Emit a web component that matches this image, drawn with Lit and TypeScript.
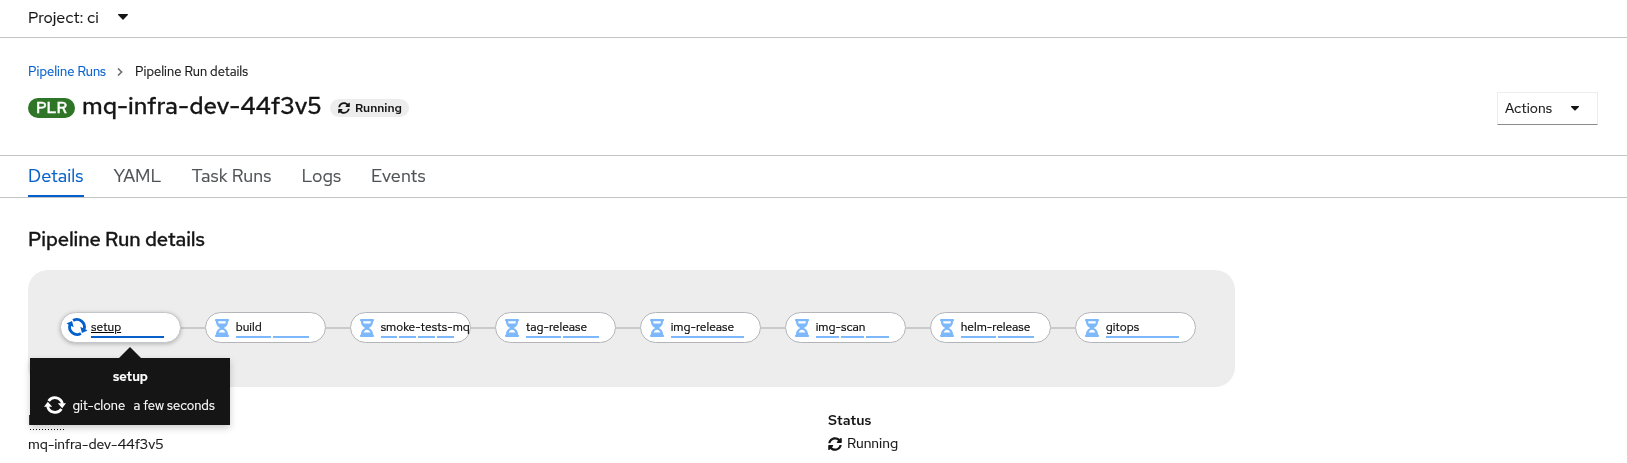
import { LitElement, html, css, svg } from "lit";
import { customElement } from "lit/decorators.js";

const SYNC = "M370.72 133.28C339.458 104.008 298.888 87.962 255.848 88c-77.458.068-144.328 53.178-162.791 126.85-1.344 5.363-6.122 9.15-11.651 9.15H24.103c-7.498 0-13.194-6.807-11.807-14.176C33.933 94.924 134.813 8 256 8c66.448 0 126.791 26.136 171.315 68.685L463.03 40.97C478.149 25.851 504 36.559 504 57.941V192c0 13.255-10.745 24-24 24H345.941c-21.382 0-32.09-25.851-16.971-40.971l41.75-41.749zM32 296h134.059c21.382 0 32.09 25.851 16.971 40.971l-41.75 41.75c31.262 29.273 71.835 45.319 114.876 45.28 77.418-.07 144.315-53.144 162.787-126.849 1.344-5.363 6.122-9.15 11.651-9.15h57.304c7.498 0 13.194 6.807 11.807 14.176C478.067 417.076 377.187 504 256 504c-66.448 0-126.791-26.136-171.315-68.685L48.97 471.03C33.851 486.149 8 475.441 8 454.059V320c0-13.255 10.745-24 24-24z";
const HOURGLASS = "M360 0H24C10.745 0 0 10.745 0 24v16c0 13.255 10.745 24 24 24 0 90.965 51.016 167.734 120.842 192C75.016 280.266 24 357.035 24 448c-13.255 0-24 10.745-24 24v16c0 13.255 10.745 24 24 24h336c13.255 0 24-10.745 24-24v-16c0-13.255-10.745-24-24-24 0-90.965-51.016-167.734-120.842-192C308.984 231.734 360 154.965 360 64c13.255 0 24-10.745 24-24V24c0-13.255-10.745-24-24-24zm-75.078 384H99.08c17.059-46.797 52.096-80 92.92-80 40.821 0 75.862 33.196 92.922 80zm.019-256H99.078C91.988 108.548 88 86.748 88 64h208c0 22.805-3.987 44.587-11.059 64z";

const sync = (cls: string) => html`<svg class=${cls} viewBox="0 0 512 512" fill="currentColor">${svg`<path d=${SYNC}></path>`}</svg>`;
const spinner = html`<svg class="spin" viewBox="0 0 22 22"><g fill="none" stroke="currentColor" stroke-width="2.8"><path d="M4.600 7A7.600 7.600 0 0 1 18.400 9.800"></path><path d="M17.400 15A7.600 7.600 0 0 1 3.600 12.200"></path></g><path fill="currentColor" d="M13.800 9.200H22l-3.800 5zM8.200 12.800H0l3.800-5z"></path></svg>`;
const caret = html`<svg class="caret" viewBox="0 0 10 6" fill="currentColor"><path d="M.6 0h8.800c.6 0 .8.6.4 1L5.500 5.400a.7.7 0 0 1-1 0L.2 1C-.2.600 0 0 .6 0z"></path></svg>`;

const TASKS = [
  { name: "setup", steps: 1, active: true },
  { name: "build", steps: 2 },
  { name: "smoke-tests-mq", steps: 4 },
  { name: "tag-release", steps: 2 },
  { name: "img-release", steps: 1 },
  { name: "img-scan", steps: 3 },
  { name: "helm-release", steps: 2 },
  { name: "gitops", steps: 1 },
];

@customElement("app-root")
export class AppRoot extends LitElement {
  static styles = css`
    :host { display: block; height: 463px; overflow: hidden; background: #fff; color: #151515; will-change: transform;
      -webkit-text-stroke: .2px currentColor;
      font: 14px/21px "Red Hat Text", Inter, "Liberation Sans", sans-serif; }
    * { box-sizing: border-box; }
    svg { display: block; flex: none; }
    .t { white-space: nowrap; }
    .project { display: flex; align-items: center; height: 38px; padding: 0 28px 3px; border-bottom: 1px solid #c3c4c6; font-size: 16px; }
    .project .t { width: 90px; letter-spacing: -.03px; }
    .caret { width: 10px; height: 6px; }
    .head { display: flex; flex-direction: column; height: 118px; padding: 23px 28px 0; border-bottom: 1px solid #c3c4c6; }
    .crumbs { display: flex; align-items: center; height: 21px; font-size: 13px; }
    .crumbs .link { color: #0560cc; width: 89px; }
    .chev { width: 6px; height: 8px; margin-right: 12px; }
    .titlebar { display: flex; align-items: flex-start; height: 44px; padding-top: 9px; }
    .title { display: flex; align-items: flex-start; flex: 1; height: 33px; }
    .badge { width: 47px; height: 20px; border-radius: 20px; background: #2f7527; color: #fff; font-size: 16px; line-height: 20px; text-align: center; font-weight: 500; -webkit-text-stroke-width: .4px; margin: 7px 7px 0 0; }
    .name { width: 248px; font-size: 24px; line-height: 32px; font-weight: 500; margin-top: -1px; -webkit-text-stroke-width: .3px; }
    .chip { display: flex; align-items: center; gap: 5px; width: 79px; height: 18px; padding-left: 8px; border-radius: 18px; background: #ededed; font-size: 12px; font-weight: 600; line-height: 18px; margin-top: 8px; -webkit-text-stroke-width: 0; }
    .s12 { width: 12px; height: 12px; }
    .s14 { width: 14px; height: 14px; }
    .actions { display: flex; align-items: center; width: 101px; height: 33px; margin: 1px 1px 0 0; padding-left: 7px; border: 1px solid #ededed; border-bottom-color: #8a8d90; }
    .actions .t { width: 66px; letter-spacing: .04px; }
    .actions .caret { width: 8px; height: 5px; }
    .tabs { display: flex; gap: 30px; height: 42px; padding-left: 28px; border-bottom: 1px solid #c3c4c6; font-size: 18px; line-height: 27px; color: #4f5255; }
    .tab { padding-top: 6px; height: 41px; border-bottom: 2px solid transparent; letter-spacing: .03px; }
    .tab.on { color: #0560cc; border-color: #0560cc; }
    .body { padding: 0 28px; }
    h2 { margin: 0; height: 72px; padding-top: 27px; font-size: 20px; line-height: 28px; font-weight: 500; letter-spacing: -.12px; -webkit-text-stroke-width: .35px; }
    .graph { display: flex; width: 1207px; height: 117px; padding: 42px 0 0 32.400px; border-radius: 20px; background: #ededed; }
    .node { display: flex; width: 121px; height: 31px; padding-left: 9px; border: 1px solid #b3b5b9; border-radius: 16px; background: #fff; font-size: 12px; line-height: 18px; position: relative; flex: none; color: #000; }
    .node.active { box-shadow: 0 1px 4px rgba(0,0,0,.25); padding-left: 5px; border-color: #c4c6c9; }
    .wire { flex: none; width: 24px; height: 2px; margin-top: 15px; background: #cacaca; }
    .hour { width: 14px; height: 18px; margin: 6px 6.300px 0 0; color: #7db8fa; }
    .spin { width: 22px; height: 22px; margin: 3px 2.600px 0 0; color: #0560cc; transform: rotate(27deg); }
    .label { display: flex; flex-direction: column; width: 73px; padding-top: 5px; }
    .active .label .t { text-decoration: underline; }
    .steps { display: flex; gap: 2px; height: 2px; }
    .steps i { flex: 1; background: #7db8fa; }
    .active .steps i { background: #0560cc; }
    .tip { position: absolute; top: 45px; left: -31px; width: 200px; height: 67px; background: #151515; color: #fff; box-shadow: 0 3px 7px rgba(0,0,0,.2); font-size: 13px; z-index: 2; }
    .arrow { width: 0; height: 0; border: 11px solid transparent; border-top: 0; border-bottom-color: #151515; margin: -11px auto 0; }
    .tipname { text-align: center; height: 29px; line-height: 20px; padding-top: 9px; font-weight: 600; }
    .tiprow { display: flex; align-items: center; height: 20px; padding-left: 14px; margin-top: 9px; }
    .tiprow .a { width: 61px; }
    .tiprow .spin { color: #fff; margin: -2px 6px 0 0; transform: none; }
    .facts { display: grid; grid-template-columns: 800px 1fr; padding-top: 23px; line-height: 21px; }
    .facts b { display: block; font-weight: 600; height: 23px; -webkit-text-stroke-width: 0; }
    .term { display: inline-block; width: 38px; height: 20px; background: repeating-linear-gradient(90deg, transparent 0 2px, #151515 2px 3px) 0 100% / 100% 1px no-repeat; }
    .n { display: block; padding-top: 1px; letter-spacing: -.03px; }
    .status { display: flex; align-items: center; gap: 5px; }
  `;

  render() {
    return html`
      <div class="project"><span class="t">Project: ci</span>${caret}</div>
      <header class="head">
        <nav class="crumbs"><span class="t link">Pipeline Runs</span>
          <svg class="chev" viewBox="0 0 6 8" fill="none" stroke="#6a6e73" stroke-width="1.6"><path d="M1 .5 4.600 4 1 7.500"></path></svg>
          <span class="t here">Pipeline Run details</span></nav>
        <div class="titlebar">
          <div class="title"><span class="badge t">PLR</span><span class="name t">mq-infra-dev-44f3v5</span>
            <span class="chip">${sync("s12")}<span class="t">Running</span></span></div>
          <div class="actions"><span class="t">Actions</span>${caret}</div>
        </div>
      </header>
      <nav class="tabs">${["Details", "YAML", "Task Runs", "Logs", "Events"].map((x, i) => html`<span class="tab t ${i === 0 ? "on" : ""}">${x}</span>`)}</nav>
      <main class="body">
        <h2><span class="t">Pipeline Run details</span></h2>
        <div class="graph">${TASKS.map((k, i) => html`${i ? html`<span class="wire"></span>` : ""}
          <div class="node ${k.active ? "active" : ""}">
            ${k.active ? spinner : html`<svg class="hour" viewBox="0 0 384 512" preserveAspectRatio="none" fill="currentColor"><path d=${HOURGLASS}></path></svg>`}
            <div class="label"><span class="t">${k.name}</span><div class="steps">${Array.from({ length: k.steps }, () => html`<i></i>`)}</div></div>
            ${k.active ? html`<div class="tip"><div class="arrow"></div><div class="tipname">setup</div><div class="tiprow">${spinner}<span class="t a">git-clone</span><span class="t b">a few seconds</span></div></div>` : ""}
          </div>`)}</div>
        <div class="facts">
          <div><b><span class="term t">Name</span></b><span class="t n">mq-infra-dev-44f3v5</span></div>
          <div><b>Status</b><span class="status">${sync("s14")}<span class="t">Running</span></span></div>
        </div>
      </main>`;
  }
}
